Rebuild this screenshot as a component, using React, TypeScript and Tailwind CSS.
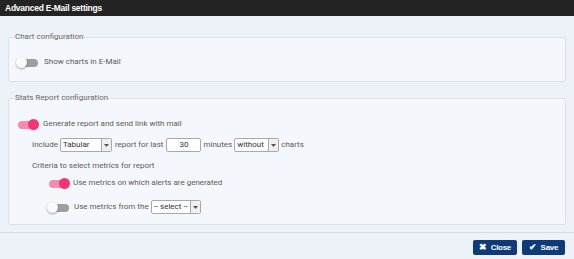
import { ReactNode } from 'react';

const Toggle = ({ on }: { on: boolean }) => (
  <div className="relative w-[22px] h-[11px] shrink-0">
    <div
      className={`absolute left-[2px] right-0 top-[2px] h-[8px] rounded-full ${
        on ? 'bg-[#f58cb0]' : 'bg-[#9e9e9e]'
      }`}
    />
    <div
      className={`absolute top-0 w-[11px] h-[11px] rounded-full ${
        on ? 'right-[-1px] bg-[#f43572]' : 'left-0 bg-[#fafafa] shadow-[0_1px_2px_rgba(0,0,0,0.35)]'
      }`}
    />
  </div>
);

const Select = ({ value, width }: { value: string; width: string }) => (
  <div
    className={`flex h-[14px] items-stretch bg-white border border-[#a9a9a9] rounded-[2px] ${width}`}
  >
    <span className="flex-1 pl-[2px] leading-[12px] text-[#333]">{value}</span>
    <span className="w-[10px] border-l border-[#a9a9a9] bg-[#f0f0f0] flex items-center justify-center">
      <svg width="5" height="3" viewBox="0 0 5 3">
        <path d="M0 0h5L2.5 3z" fill="#555" />
      </svg>
    </span>
  </div>
);

const Fieldset = ({ title, children }: { title: string; children: ReactNode }) => (
  <fieldset className="border border-[#dde2ea] rounded-[2px] bg-[#f4f8fc] px-0 pb-0">
    <legend className="ml-[6px] px-0 text-[8px] leading-[10px] text-[#666]">{title}</legend>
    {children}
  </fieldset>
);

export default function App() {
  return (
    <div
      className="w-[574px] h-[259px] bg-[#edf1f8] flex flex-col text-[8px] text-[#5a5a5a]"
      style={{ fontFamily: 'Roboto, sans-serif' }}
    >
      <div
        className="h-[16px] bg-[#232323] text-white font-bold text-[8.5px] leading-[16px] pl-[5px] tracking-[-0.25px]"
        style={{ fontFamily: '"Liberation Sans", Arial, sans-serif' }}
      >
        Advanced E-Mail settings
      </div>

      <div className="px-[8px] pt-[16px]">
        <Fieldset title="Chart configuration">
          <div className="pl-[7px] pt-[15px] pb-[14px] flex items-center gap-[6px] h-[39px]">
            <Toggle on={false} />
            <span className="leading-[10px]">Show charts in E-Mail</span>
          </div>
        </Fieldset>

        <div className="h-[11px]" />

        <Fieldset title="Stats Report configuration">
          <div className="pl-[7px] pt-[16px] pb-[10px] flex flex-col">
            <div className="flex items-center gap-[5px] h-[10px]">
              <Toggle on />
              <span className="leading-[10px]">Generate report and send link with mail</span>
            </div>

            <div className="flex items-center gap-[2px] h-[14px] mt-[9px] pl-[16px]">
              <span>Include</span>
              <Select value="Tabular" width="w-[52px]" />
              <span className="ml-[1px]">report for last</span>
              <div className="ml-[1px] w-[35px] h-[14px] bg-white border border-[#a9a9a9] rounded-[2px] text-center leading-[12px] text-[#333]">
                30
              </div>
              <span>minutes</span>
              <Select value="without" width="w-[45px]" />
              <span>charts</span>
            </div>

            <div className="h-[10px] leading-[10px] mt-[9px] pl-[16px]">
              Criteria to select metrics for report
            </div>

            <div className="flex items-center gap-[4px] h-[10px] mt-[7px] pl-[31px]">
              <Toggle on />
              <span className="leading-[10px]">Use metrics on which alerts are generated</span>
            </div>

            <div className="flex items-center gap-[5px] h-[14px] mt-[12px] pl-[31px]">
              <Toggle on={false} />
              <span className="leading-[10px]">Use metrics from the</span>
              <Select value="-- select --" width="w-[50px] -ml-[3px]" />
            </div>
          </div>
        </Fieldset>
      </div>

      <div className="mt-[7px] border-t border-[#d6dbe3] flex justify-end gap-[5px] pr-[9px] pt-[7px]">
        <button
          className="h-[15px] w-[44px] bg-[#0e3b78] rounded-[2px] text-white text-[8px] font-bold flex items-center justify-center gap-[4px] tracking-[-0.3px]"
          style={{ fontFamily: '"Liberation Sans", Arial, sans-serif' }}
        >
          <span className="text-[9px] leading-none">✖</span>
          Close
        </button>
        <button
          className="h-[15px] w-[43px] bg-[#0e3b78] rounded-[2px] text-white text-[8px] font-bold flex items-center justify-center gap-[4px] tracking-[-0.3px]"
          style={{ fontFamily: '"Liberation Sans", Arial, sans-serif' }}
        >
          <span className="text-[9px] leading-none">✔</span>
          Save
        </button>
      </div>
    </div>
  );
}
